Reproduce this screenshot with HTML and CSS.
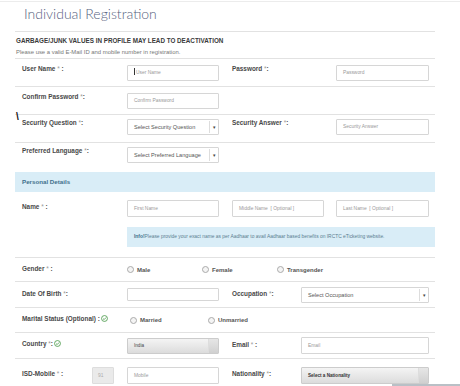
FILE: index.html
```html
<!DOCTYPE html>
<html lang="en">
<head>
  <meta charset="UTF-8" />
  <meta name="viewport" content="width=device-width, initial-scale=1" />
  <title>Individual Registration</title>
  <link rel="stylesheet" href="styles.css">
</head>
<body>
  <div class="topline"></div>
  <div class="page">
    <div class="titulo">Individual Registration</div>

    <div class="aviso">
      <div class="aviso-forte">GARBAGE/JUNK VALUES IN PROFILE MAY LEAD TO DEACTIVATION</div>
      <div class="aviso-texto">Please use a valid E-Mail ID and mobile number in registration.</div>
    </div>

    <div class="linha">
      <div class="rotulo">User Name <i>*</i> :</div>
      <div class="campo"><span class="cursor"></span>User Name</div>
      <div class="sep"></div>
      <div class="rotulo r2">Password <i>*</i>:</div>
      <div class="campo c2">Password</div>
    </div>

    <div class="linha">
      <div class="rotulo">Confirm Password <i>*</i>:</div>
      <div class="campo">Confirm Password</div>
    </div>

    <div class="linha l3">
      <span class="barra">\</span>
      <div class="rotulo">Security Question <i>*</i>:</div>
      <div class="campo sel">Select Security Question<span class="seta">&#9662;</span></div>
      <div class="sep"></div>
      <div class="rotulo r2">Security Answer <i>*</i>:</div>
      <div class="campo c2">Security Answer</div>
    </div>

    <div class="linha l4">
      <div class="rotulo">Preferred Language <i>*</i>:</div>
      <div class="campo sel">Select Preferred Language<span class="seta">&#9662;</span></div>
    </div>

    <div class="painel">Personal Details</div>

    <div class="bloco-nome">
      <div class="linha-nome">
        <div class="rotulo">Name <i>*</i> :</div>
        <div class="campo">First Name</div>
        <div class="sep"></div>
        <div class="campo">Middle Name&nbsp; [ Optional ]</div>
        <div class="sep s12"></div>
        <div class="campo c3">Last Name&nbsp; [ Optional ]</div>
      </div>
      <div class="info"><b>Info!</b>Please provide your exact name as per Aadhaar to avail Aadhaar based benefits on IRCTC eTicketing website.</div>
    </div>

    <div class="linha centro lg">
      <div class="rotulo">Gender <i>*</i> :</div>
      <div class="radio"><span class="bola"></span>Male</div>
      <div class="radio"><span class="bola"></span>Female</div>
      <div class="radio"><span class="bola"></span>Transgender</div>
    </div>

    <div class="linha centro ld">
      <div class="rotulo">Date Of Birth <i>*</i>:</div>
      <div class="campo data"></div>
      <div class="sep"></div>
      <div class="rotulo r3">Occupation <i>*</i>:</div>
      <div class="campo largo sel">Select Occupation<span class="seta">&#9662;</span></div>
    </div>

    <div class="linha centro lm">
      <div class="rotulo">Marital Status (Optional) :<span class="ok"><svg width="7" height="7" viewBox="0 0 10 10"><circle cx="5" cy="5" r="4.2" fill="none" stroke="#4a9a4a" stroke-width="1.2"/><path d="M3 5.2l1.5 1.4L7.2 3.6" fill="none" stroke="#4a9a4a" stroke-width="1.2"/></svg></span></div>
      <div class="radio rm"><span class="bola"></span>Married</div>
      <div class="radio rm"><span class="bola"></span>Unmarried</div>
    </div>

    <div class="linha centro lc">
      <div class="rotulo">Country <i>*</i>:<span class="ok"><svg width="7" height="7" viewBox="0 0 10 10"><circle cx="5" cy="5" r="4.2" fill="none" stroke="#4a9a4a" stroke-width="1.2"/><path d="M3 5.2l1.5 1.4L7.2 3.6" fill="none" stroke="#4a9a4a" stroke-width="1.2"/></svg></span></div>
      <div class="campo cinza">India<span class="fim"></span></div>
      <div class="sep"></div>
      <div class="rotulo r3">Email <i>*</i> :</div>
      <div class="campo largo alto">Email</div>
    </div>

    <div class="linha centro li">
      <div class="rotulo ri">ISD-Mobile <i>*</i> :</div>
      <div class="campo isd">91</div>
      <div class="sep s13"></div>
      <div class="campo alto">Mobile</div>
      <div class="sep"></div>
      <div class="rotulo r3">Nationality <i>*</i>:</div>
      <div class="campo largo cinza alto forte">Select a Nationality<span class="fim"></span></div>
    </div>
  </div>
  <div class="rodape"></div>
</body>
</html>
```

FILE: styles.css
```css
body {
  margin: 0;
  font-family: "Liberation Sans", Arial, sans-serif;
  background: #fff;
  color: #333;
  overflow: hidden;
}
.topline {
  margin-top: 1px;
  border-top: 1px solid #ececec;
}
.page {
  width: 420px;
  margin-left: 15px;
}
.titulo {
  height: 30px;
  box-sizing: border-box;
  padding: 3px 0 0 9px;
  font-family: Lato, "DejaVu Sans", sans-serif;
  font-weight: 300;
  font-size: 14px;
  color: #56627e;
  border-bottom: 1px solid #e2e2e2;
}
.aviso {
  height: 27px;
  box-sizing: border-box;
  padding: 5px 0 0 1px;
  border-bottom: 1px solid #e2e2e2;
}
.aviso-forte {
  font-size: 6.3px;
  font-weight: bold;
  color: #3a3a3a;
  line-height: 8px;
}
.aviso-texto {
  font-size: 5.9px;
  color: #777;
  line-height: 8px;
  margin-top: 3px;
}
.linha {
  position: relative;
  display: flex;
  align-items: flex-start;
  height: 28px;
  box-sizing: border-box;
  padding: 6px 0 0 7px;
  border-bottom: 1px solid #e2e2e2;
}
.linha.l3 { padding-top: 4px; }
.linha.l4 { padding-top: 4px; height: 28px; border-bottom: none; }
.linha.centro { align-items: center; padding-top: 0; }
.linha.lg { height: 24px; }
.linha.ld { height: 26px; }
.linha.lm { height: 25px; }
.linha.lc { height: 26px; }
.linha.li { height: 30px; border-bottom: none; padding-top: 2px; }
.rotulo {
  width: 105px;
  flex: none;
  font-size: 6.4px;
  font-weight: bold;
  line-height: 8px;
  color: #484848;
}
.centro .rotulo { margin-top: -2px; }
.rotulo i {
  font-style: normal;
  font-weight: normal;
  color: #999;
}
.rotulo.r2 { width: 104px; }
.rotulo.r3 { width: 69px; }
.rotulo.ri { width: 70px; }
.ok {
  display: inline-block;
  margin-left: 1px;
  vertical-align: -1px;
}
.campo {
  position: relative;
  width: 92px;
  height: 16px;
  flex: none;
  box-sizing: border-box;
  border: 1px solid #d6d6d6;
  border-radius: 1px;
  padding-left: 6px;
  font-size: 4.9px;
  line-height: 14px;
  color: #999;
  background: #fff;
}
.campo.c2 { width: 93px; }
.campo.c3 { width: 93px; }
.campo.alto { height: 17px; line-height: 15px; }
.campo.data { height: 13px; }
.campo.largo { width: 128px; }
.campo.sel {
  font-size: 5.6px;
  color: #555;
}
.cursor {
  display: inline-block;
  width: 1px;
  height: 7px;
  background: #333;
  vertical-align: -1px;
  margin-right: 1px;
}
.seta {
  position: absolute;
  right: 0;
  top: 1px;
  bottom: 1px;
  width: 8px;
  border-left: 1px solid #ddd;
  text-align: center;
  font-size: 5px;
  line-height: 12px;
  color: #444;
}
.campo.cinza {
  border-color: #ccc;
  background: linear-gradient(#f4f4f4, #dcdcdc);
  color: #444;
  font-size: 4.6px;
}
.campo.forte { font-weight: bold; color: #333; }
.fim {
  position: absolute;
  right: 0;
  top: 0;
  bottom: 0;
  width: 9px;
  border-left: 1px solid #ddd;
  background: linear-gradient(#e6e6e6, #d0d0d0);
}
.campo.isd {
  width: 22px;
  height: 17px;
  background: #eaeaea;
  border-color: #ddd;
  color: #aaa;
  padding-left: 5px;
  line-height: 15px;
}
.sep { width: 13px; flex: none; }
.sep.s12 { width: 12px; }
.sep.s13 { width: 13px; }
.barra {
  position: absolute;
  left: 1px;
  top: -3px;
  font-size: 10px;
  line-height: 10px;
  font-weight: bold;
  color: #111;
}
.painel {
  margin-top: 1px;
  height: 20px;
  box-sizing: border-box;
  padding: 6px 0 0 7px;
  background: #d9edf7;
  font-size: 6.2px;
  font-weight: bold;
  line-height: 8px;
  color: #41708c;
}
.bloco-nome {
  height: 66px;
  box-sizing: border-box;
  border-bottom: 1px solid #e2e2e2;
}
.linha-nome {
  display: flex;
  align-items: center;
  height: 32px;
  padding-left: 7px;
}
.linha-nome .rotulo { margin-top: -3px; }
.linha-nome .campo { height: 17px; line-height: 15px; }
.info {
  margin: 3px 0 0 112px;
  height: 20px;
  box-sizing: border-box;
  padding-left: 7px;
  background: #d9edf7;
  font-size: 4.9px;
  line-height: 20px;
  color: #5a7d90;
  white-space: nowrap;
}
.info b { color: #41708c; }
.radio {
  width: 75px;
  flex: none;
  display: flex;
  align-items: center;
  font-size: 6px;
  font-weight: bold;
  color: #555;
}
.radio.rm { margin-left: 3px; width: 75px; }
.bola {
  width: 5px;
  height: 5px;
  border: 1px solid #aaa;
  border-radius: 50%;
  margin-right: 3px;
  background: #f4f4f4;
}
.rodape {
  position: absolute;
  left: 392px;
  top: 384px;
  width: 68px;
  height: 2px;
  background: #b9c0c6;
}
```
